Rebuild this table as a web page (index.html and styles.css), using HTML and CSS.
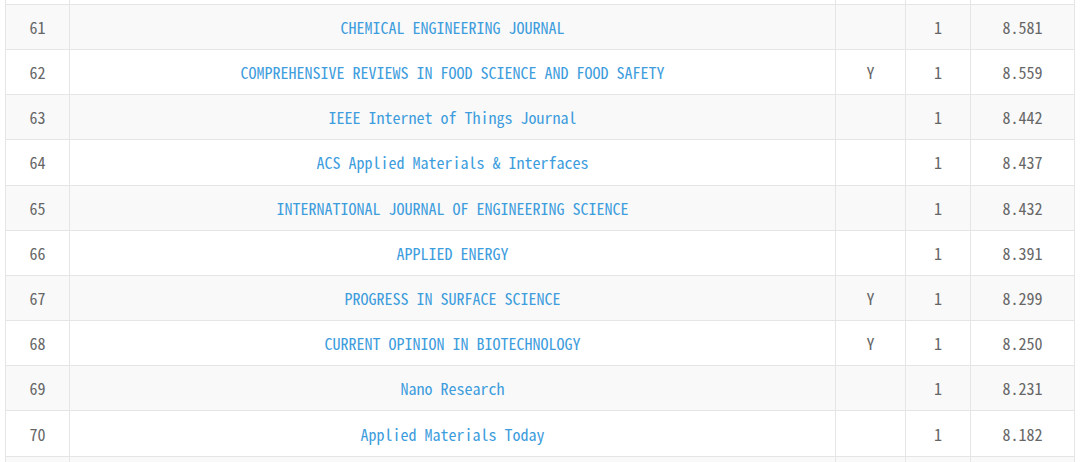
FILE: index.html
```html
<!DOCTYPE html>
<html lang="en">
<head>
<meta charset="utf-8">
<title>Journal table</title>
<link rel="stylesheet" href="styles.css">
</head>
<body>
<div class="viewport">
  <div class="table">
    <div class="row"><div class="cell num"></div><div class="cell title"></div><div class="cell flag"></div><div class="cell zone"></div><div class="cell score"></div></div>
    <div class="row alt"><div class="cell num">61</div><div class="cell title"><a>CHEMICAL ENGINEERING JOURNAL</a></div><div class="cell flag"></div><div class="cell zone">1</div><div class="cell score">8.581</div></div>
    <div class="row"><div class="cell num">62</div><div class="cell title"><a>COMPREHENSIVE REVIEWS IN FOOD SCIENCE AND FOOD SAFETY</a></div><div class="cell flag">Y</div><div class="cell zone">1</div><div class="cell score">8.559</div></div>
    <div class="row alt"><div class="cell num">63</div><div class="cell title"><a>IEEE Internet of Things Journal</a></div><div class="cell flag"></div><div class="cell zone">1</div><div class="cell score">8.442</div></div>
    <div class="row"><div class="cell num">64</div><div class="cell title"><a>ACS Applied Materials &amp; Interfaces</a></div><div class="cell flag"></div><div class="cell zone">1</div><div class="cell score">8.437</div></div>
    <div class="row alt"><div class="cell num">65</div><div class="cell title"><a>INTERNATIONAL JOURNAL OF ENGINEERING SCIENCE</a></div><div class="cell flag"></div><div class="cell zone">1</div><div class="cell score">8.432</div></div>
    <div class="row"><div class="cell num">66</div><div class="cell title"><a>APPLIED ENERGY</a></div><div class="cell flag"></div><div class="cell zone">1</div><div class="cell score">8.391</div></div>
    <div class="row alt"><div class="cell num">67</div><div class="cell title"><a>PROGRESS IN SURFACE SCIENCE</a></div><div class="cell flag">Y</div><div class="cell zone">1</div><div class="cell score">8.299</div></div>
    <div class="row"><div class="cell num">68</div><div class="cell title"><a>CURRENT OPINION IN BIOTECHNOLOGY</a></div><div class="cell flag">Y</div><div class="cell zone">1</div><div class="cell score">8.250</div></div>
    <div class="row alt"><div class="cell num">69</div><div class="cell title"><a>Nano Research</a></div><div class="cell flag"></div><div class="cell zone">1</div><div class="cell score">8.231</div></div>
    <div class="row"><div class="cell num">70</div><div class="cell title"><a>Applied Materials Today</a></div><div class="cell flag"></div><div class="cell zone">1</div><div class="cell score">8.182</div></div>
    <div class="row alt"><div class="cell num"></div><div class="cell title"></div><div class="cell flag"></div><div class="cell zone"></div><div class="cell score"></div></div>
  </div>
</div>
</body>
</html>
```

FILE: styles.css
```css
html, body {
  margin: 0;
  padding: 0;
  background: #ffffff;
}

.viewport {
  width: 1080px;
  height: 462px;
  overflow: hidden;
  padding-left: 5px;
  box-sizing: border-box;
}

.table {
  margin-top: -40.4px;
  width: 1070px;
  font-family: "Noto Sans Mono CJK SC", "Liberation Mono", monospace;
  font-size: 16px;
  color: #666666;
}

.row {
  display: grid;
  grid-template-columns: 64px 766px 70px 65px 105px;
  height: 45.2px;
  box-sizing: border-box;
  border-bottom: 1px solid #e5e5e5;
  background: #ffffff;
}

.row.alt {
  background: #f9f9f9;
}

.cell {
  display: flex;
  align-items: center;
  justify-content: center;
  border-left: 1px solid #e5e5e5;
  box-sizing: border-box;
  white-space: nowrap;
}

.cell.score {
  border-right: 1px solid #e5e5e5;
}

.title a {
  color: #3e9ddd;
  text-decoration: none;
}
```
